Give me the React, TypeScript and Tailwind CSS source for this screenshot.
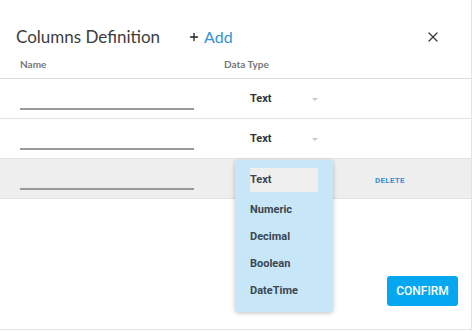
import { X, Plus } from 'lucide-react'

const types = ['Text', 'Numeric', 'Decimal', 'Boolean', 'DateTime']

function Row({ hovered, showCaret }: { hovered?: boolean; showCaret?: boolean }) {
  return (
    <div
      className={`flex h-[40px] items-start border-b border-[#e2e2e2] ${hovered ? 'bg-[#eeeeee]' : 'bg-white'}`}
    >
      <div className="ml-[20px] mt-[29px] h-[2px] w-[174px] bg-[#9a9a9a]" />
      <div className="ml-[56px] mt-[12px] flex w-[70px] items-center font-['Roboto',sans-serif] text-[11px] font-bold text-[#333]">
        {!hovered && <span>Text</span>}
        {showCaret && (
          <span className="ml-auto mr-[2px] h-0 w-0 border-x-[3px] border-t-[3px] border-x-transparent border-t-[#c8c8c8]" />
        )}
      </div>
      {hovered && (
        <span className="ml-[55px] mt-[16px] font-['Roboto',sans-serif] text-[8px] font-bold tracking-[0.3px] text-[#3b8fd0]">
          DELETE
        </span>
      )}
    </div>
  )
}

export default function App() {
  return (
    <div className="relative h-[331px] w-[474px] bg-white font-['Lato',sans-serif]">
      <div className="flex h-[330px] w-[472px] flex-col border-r border-b border-[#e4e4e4]">
        <div className="flex items-center pt-[25px] pl-[16px] pr-[30px]">
          <span className="text-[17px] leading-[24px] text-[#3d3d3d]">Columns Definition</span>
          <button className="ml-[28px] flex items-center text-[16px] leading-[24px] text-[#3592d5]">
            <Plus size={12} strokeWidth={2.6} className="mr-[4px] text-[#222]" />
            Add
          </button>
          <X size={16} strokeWidth={1.8} className="ml-auto text-[#333]" />
        </div>
        <div className="flex h-[30px] items-center border-b border-[#dcdcdc] pt-[2px] text-[10px] font-bold text-[#777]">
          <span className="ml-[20px] w-[204px]">Name</span>
          <span>Data Type</span>
        </div>
        <Row showCaret />
        <Row showCaret />
        <Row hovered />
        <div className="mt-[77px] flex justify-end pr-[13px]">
          <button className="h-[30px] w-[71px] rounded-[3px] bg-[#06a7f1] font-['Roboto',sans-serif] text-[12px] font-medium text-white">
            CONFIRM
          </button>
        </div>
      </div>

      <div className="absolute left-[235px] top-[160px] h-[152px] w-[98px] rounded-[3px] bg-[#c7e6f8] pt-[8px] shadow-[0_1px_4px_rgba(0,0,0,0.25)]">
        {types.map((t, i) => (
          <div
            key={t}
            className={`ml-[15px] flex w-[68px] items-center font-['Roboto',sans-serif] text-[11px] font-bold text-[#3a4650] ${
              i === 0 ? 'mb-[5px] h-[24px] bg-[#efefef]' : 'h-[27px]'
            }`}
          >
            {t}
          </div>
        ))}
      </div>
    </div>
  )
}
